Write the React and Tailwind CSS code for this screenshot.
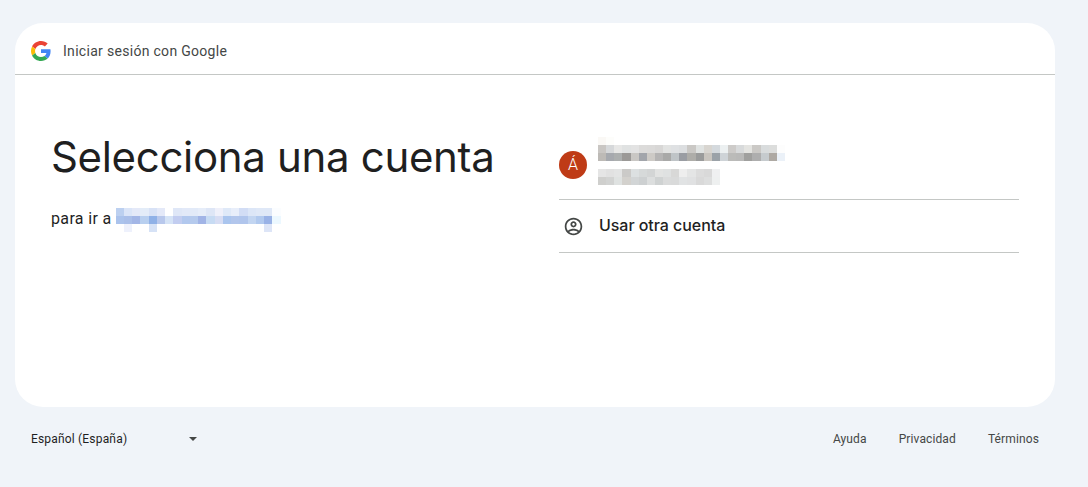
const NAME_ROWS = [
  ["#faf8f5", "#fdfdfb"],
  ["#c9c6c3", "#d6d8da", "#e7e7e6", "#e0e2e2", "#e3e3e3", "#dcdbda", "#dbdad9", "#d8d7d6", "#e2e3e2", "#dfe1e3", "#dcdee0", "#cac8c5", "#e0e3e2", "#d8d5d0", "#d4d9dd", "#ecf0f1", "#cdcbc9", "#d8dadb", "#e4e4e1", "#cbc9c6", "#d9dcdd", "#dcdddc", "#fdfdfd"],
  ["#bdbab6", "#a6a9ae", "#acafaf", "#9b9997", "#c9c7c4", "#a2a5ab", "#cdcac6", "#b5b4b4", "#a9a9a8", "#bfc4c7", "#9a9da3", "#aeada9", "#9a9b9b", "#c9c5bf", "#9ba2a8", "#ced3d7", "#bbbbb9", "#b9b9b8", "#a0a09e", "#aeaeae", "#c6cbce", "#aea9a3", "#ebf1f8"],
];

const EMAIL_ROWS = [
  ["#e5e5e5", "#e1e1e1", "#e3e4e4", "#cbcac8", "#dce0e1", "#d6d9d9", "#d3d5d5", "#e2e3e2", "#dfe1e1", "#d8d8d7", "#eeeeee", "#e4e5e5", "#dcdcdc", "#d9d9d9", "#eff0f1"],
  ["#cfcfcd", "#d2d3d2", "#dfe2e1", "#d3d1cd", "#d2d5d6", "#cdd0d1", "#dcdede", "#cfd2d2", "#dadbdb", "#d9dada", "#e1e3e4", "#e0e1e2", "#d9d9d9", "#dddede", "#eef0f0"],
];

const LINK_ROWS = [
  ["#bcd0f0", "#dbe5f8", "#e4e9f8", "#e3ecf8", "#d8e2f6", "#e4e9f8", "#ffffff", "#dfe7f7", "#e2e9f8", "#e2eaf8", "#e6edf9", "#dee6f6", "#eff0fa", "#dfe9f8", "#e8eefa", "#d2ddf5", "#dce6f7", "#dfe8f7", "#dfe8f7", "#fbfdff"],
  ["#abc3ec", "#aabfe9", "#a3b6e6", "#b8cfef", "#8fb1e7", "#b8c8ec", "#d5e3f6", "#c2cdf0", "#b2c8ee", "#b5caed", "#a1b4e6", "#c7dbf3", "#d7ddf3", "#aac5ee", "#b2c6ec", "#b0c5ec", "#c2d5f1", "#b1c9ee", "#99b2e6", "#ecf8ff"],
  ["#ffffff", "#eef1fc", "#ffffff", "#ffffff", "#d6e2f6", "#ffffff", "#ffffff", "#ffffff", "#ffffff", "#ffffff", "#ffffff", "#ffffff", "#ffffff", "#ffffff", "#ffffff", "#ffffff", "#ffffff", "#ffffff", "#dde5f7"],
];

// the blurred-out text in the screenshot, blocks of about 8px
const Pixelated = ({ rows, blockClass }) => (
  <div className="flex flex-col">
    {rows.map((row, i) => (
      <div key={i} className="flex h-2">
        {row.map((color, j) => (
          <div key={j} className={`h-2 ${blockClass}`} style={{ backgroundColor: color }} />
        ))}
      </div>
    ))}
  </div>
);

const GoogleLogo = () => (
  <svg className="w-5 h-5 shrink-0" viewBox="0 0 48 48">
    <path fill="#EA4335" d="M24 9.5c3.54 0 6.71 1.22 9.21 3.6l6.85-6.85C35.9 2.38 30.47 0 24 0 14.62 0 6.51 5.38 2.56 13.22l7.98 6.19C12.43 13.72 17.74 9.5 24 9.5z" />
    <path fill="#4285F4" d="M46.98 24.55c0-1.57-.15-3.09-.38-4.55H24v9.02h12.94c-.58 2.96-2.26 5.48-4.78 7.18l7.73 6c4.51-4.18 7.09-10.36 7.09-17.65z" />
    <path fill="#FBBC05" d="M10.53 28.59c-.48-1.45-.76-2.99-.76-4.59s.27-3.14.76-4.59l-7.98-6.19C.92 16.46 0 20.12 0 24c0 3.88.92 7.54 2.56 10.78l7.97-6.19z" />
    <path fill="#34A853" d="M24 48c6.48 0 11.93-2.13 15.89-5.81l-7.73-6c-2.15 1.45-4.92 2.3-8.16 2.3-6.26 0-11.57-4.22-13.47-9.91l-7.98 6.19C6.51 42.62 14.62 48 24 48z" />
  </svg>
);

const AccountIcon = () => (
  <svg className="w-[21px] h-[21px] text-[#444746]" viewBox="0 0 24 24" fill="currentColor">
    <path d="M12 2C6.48 2 2 6.48 2 12s4.48 10 10 10 10-4.48 10-10S17.52 2 12 2zM7.07 18.28c.43-.9 3.05-1.78 4.93-1.78s4.51.88 4.93 1.78C15.57 19.36 13.86 20 12 20s-3.57-.64-4.93-1.72zm11.29-1.45c-1.43-1.74-4.9-2.33-6.36-2.33s-4.93.59-6.36 2.33C4.62 15.49 4 13.82 4 12c0-4.41 3.59-8 8-8s8 3.59 8 8c0 1.82-.62 3.49-1.64 4.83zM12 6c-1.94 0-3.5 1.56-3.5 3.5S10.06 13 12 13s3.5-1.56 3.5-3.5S13.94 6 12 6zm0 5c-.83 0-1.5-.67-1.5-1.5S11.17 8 12 8s1.5.67 1.5 1.5S12.83 11 12 11z" />
  </svg>
);

const App = () => {
  return (
    <div className="h-[487px] overflow-hidden bg-[#f0f4f9] pt-[23px] px-[15px] font-['Roboto',sans-serif] text-[#1f1f1f]">
      <div className="w-[1040px] h-[384px] bg-white rounded-[28px] flex flex-col">
        <header className="h-[52px] shrink-0 flex items-center gap-3 pl-4 pt-1 border-b border-[#c4c7c5]">
          <GoogleLogo />
          <span className="text-sm font-[450] tracking-[0.3px] text-[#444746]">Iniciar sesión con Google</span>
        </header>

        <main className="flex flex-1">
          <div className="w-[544px] shrink-0 pl-9 pt-14">
            <h1 className="text-[42px] leading-[52px] font-['Inter',sans-serif] font-normal tracking-[-0.33px]">Selecciona una cuenta</h1>
            <div className="flex items-start mt-[25px] text-base">
              <span className="leading-[22px] tracking-[0.35px] mr-1">para ir a</span>
              <Pixelated rows={LINK_ROWS} blockClass="w-[8.25px]" />
            </div>
          </div>

          <div className="w-[460px] shrink-0 pt-[62px]">
            <div className="flex items-start h-[63px] border-b border-[#c4c7c5]">
              <div className="w-7 h-7 mt-[14px] mr-[11px] rounded-full bg-[#bf3b16] flex items-center justify-center text-white text-base font-light">
                Á
              </div>
              <div className="flex flex-col gap-2">
                <Pixelated rows={NAME_ROWS} blockClass="w-[8.13px]" />
                <Pixelated rows={EMAIL_ROWS} blockClass="w-[8.13px]" />
              </div>
            </div>
            <div className="flex items-center h-[53px] border-b border-[#c4c7c5]">
              <div className="w-7 flex justify-center mr-3">
                <AccountIcon />
              </div>
              <span className="text-base leading-5 pb-0.5 font-medium font-['Inter',sans-serif] tracking-[-0.05px]">Usar otra cuenta</span>
            </div>
          </div>
        </main>
      </div>

      <footer className="flex items-center justify-between w-[1040px] h-[32px] mt-4 px-4 text-xs text-[#444746]">
        <div className="flex items-center w-[167px] justify-between">
          <span className="text-[#1f1f1f] tracking-[0.18px]">Español (España)</span>
          <span className="w-0 h-0 mr-px border-x-[4.5px] border-x-transparent border-t-[4.5px] border-t-[#444746]" />
        </div>
        <nav className="flex gap-8 tracking-[0.12px]">
          <span>Ayuda</span>
          <span>Privacidad</span>
          <span>Términos</span>
        </nav>
      </footer>
    </div>
  );
};

export default App;
